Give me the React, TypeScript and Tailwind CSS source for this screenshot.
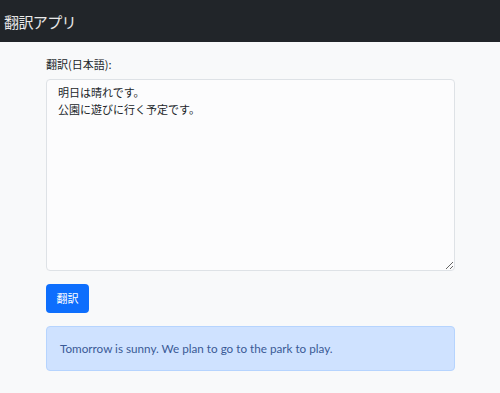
export default function App() {
  const jp = { fontFamily: '"Noto Sans CJK JP", "Noto Sans", sans-serif' };
  return (
    <div className="min-h-[393px] bg-[#f8f9fa]" style={jp}>
      <nav className="h-[42px] bg-[#212529] flex items-center px-[4px]">
        <span className="text-[15px] tracking-[-0.6px] text-white/90 leading-none">翻訳アプリ</span>
      </nav>
      <main className="w-[409px] ml-[46px] pt-[13px]">
        <label className="block text-[11px] text-[#212529] leading-[18px] mb-[6px]">
          翻訳(日本語):
        </label>
        <textarea
          className="block w-full h-[192px] bg-[#fcfcfd] border border-[#dee2e6] rounded-[4px] px-[11px] py-[4px] text-[11px] leading-[17px] text-[#212529] outline-none"
          style={jp}
          defaultValue={"明日は晴れです。\n公園に遊びに行く予定です。"}
        />
        <button
          className="mt-[13px] h-[29px] w-[43px] bg-[#0d6efd] text-white text-[11px] rounded-[4px]"
          style={jp}
        >
          翻訳
        </button>
        <div
          className="mt-[13px] h-[45px] flex items-center px-[13px] bg-[#cfe2ff] border border-[#b6d4fe] rounded-[4px] text-[#3a5a96] text-[11.7px]"
          style={{ fontFamily: 'Lato, "Open Sans", sans-serif' }}
        >
          Tomorrow is sunny. We plan to go to the park to play.
        </div>
      </main>
    </div>
  );
}
